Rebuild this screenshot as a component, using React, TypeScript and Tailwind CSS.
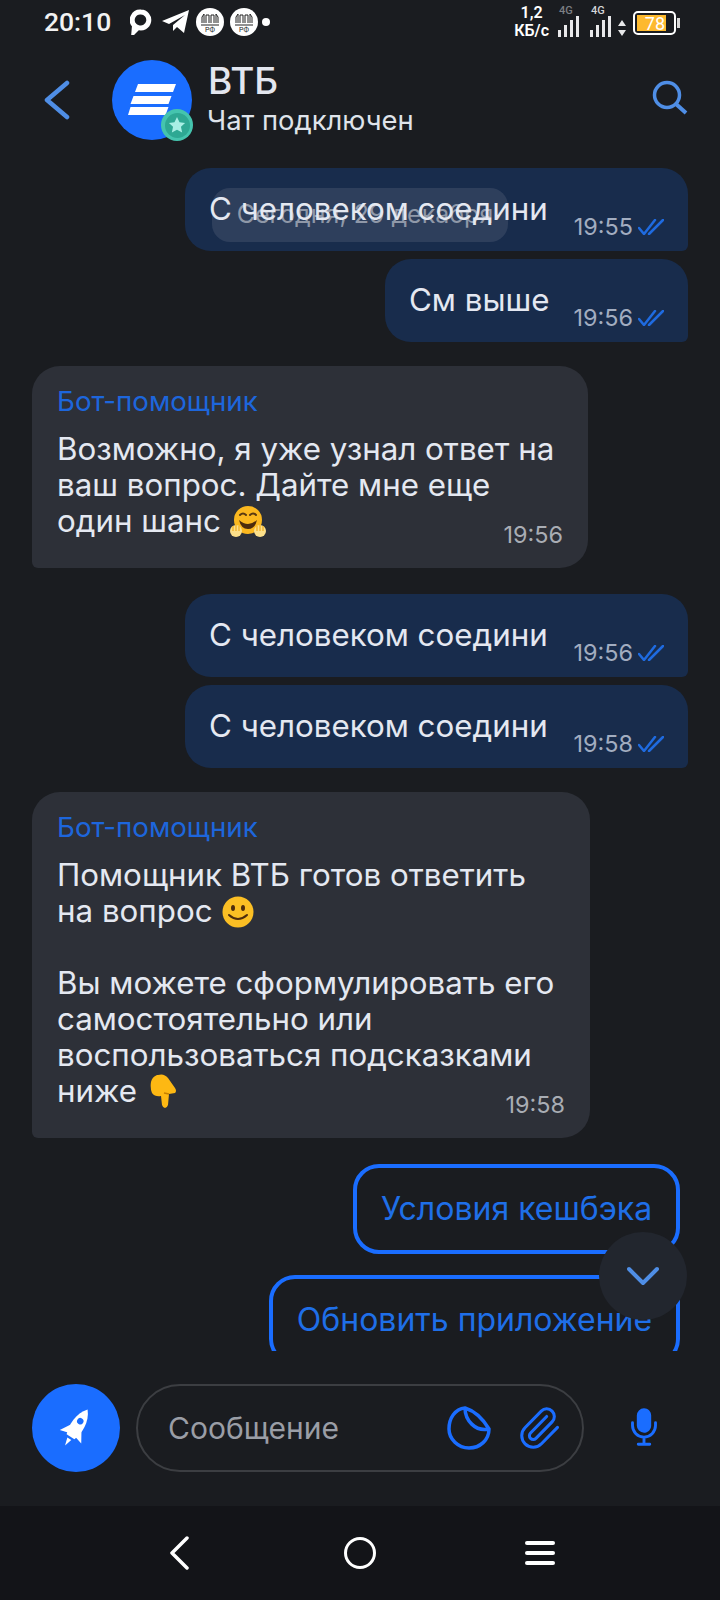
import React from "react";
import { IoMic } from "react-icons/io5";
import { Paperclip } from "lucide-react";

const DoubleCheck = () => (
  <svg width="26" height="16" viewBox="0 0 26 16" fill="none" stroke="#1f6be0" strokeWidth="2.500" strokeLinecap="round">
    <path d="M1 9l5 6L17 1" />
    <path d="M11 15L25 1" />
  </svg>
);

const HugEmoji = () => (
  <svg width="36" height="32" viewBox="0 0 36 32" className="inline-block align-[2px] -my-2">
    <circle cx="18" cy="14" r="14" fill="#fbb81f" />
    <path d="M10 9q3-3 6 0M20 9q3-3 6 0" fill="none" stroke="#5a3a12" strokeWidth="2" strokeLinecap="round" />
    <path d="M9 14q9 8 18 0q-2 9-9 9t-9-9z" fill="#4d2c0d" />
    <ellipse cx="6" cy="25" rx="6" ry="6" fill="#fde08a" />
    <ellipse cx="30" cy="25" rx="6" ry="6" fill="#fde08a" />
    <path d="M3 20v5M6 19v6M9 20v5M27 20v5M30 19v6M33 20v5" stroke="#f2b530" strokeWidth="1.5" />
  </svg>
);

const SmileEmoji = () => (
  <svg width="36" height="32" viewBox="0 0 36 32" className="inline-block align-[2px] -my-2">
    <circle cx="17" cy="16" r="15.500" fill="#fbbf24" />
    <ellipse cx="12" cy="12" rx="2" ry="3" fill="#4d2c0d" />
    <ellipse cx="22" cy="12" rx="2" ry="3" fill="#4d2c0d" />
    <path d="M8 19q9 8 18 0" fill="none" stroke="#4d2c0d" strokeWidth="2" strokeLinecap="round" />
  </svg>
);

const PointEmoji = () => (
  <svg width="28" height="34" viewBox="0 0 28 34" className="inline-block align-[6px] ml-[4px] -my-3">
    <path d="M8 1q6-2 10 3l7 10q2 3 0 5l-6 1-1 11q-1 3-3 3t-3-3l-1-9q-6 1-9-3Q0 14 1 8q1-5 6-7z" fill="#fdb813" />
    <path d="M19 20l-5-1" stroke="#c47f00" strokeWidth="1.500" />
  </svg>
);

const DomRf = () => (
  <svg width="28" height="28" viewBox="0 0 28 28">
    <circle cx="14" cy="14" r="14" fill="#fff" />
    <path d="M6 15V9l2-3v9M10 15V7h3v8M15 15V7h3v8M20 15V6l2 3v6" fill="none" stroke="#222" strokeWidth="1" />
    <path d="M5 17h18" stroke="#222" strokeWidth="1" />
    <text x="14" y="24" textAnchor="middle" fontSize="7" fill="#222" fontFamily="Roboto, sans-serif">РФ</text>
  </svg>
);

const Signal = ({ dim }: { dim?: boolean }) => (
  <div className="relative w-[21px] h-[30px]">
    <span className={`absolute -top-[2px] left-[1px] text-[11px] leading-[12px] font-medium ${dim ? "text-[#7d7f84]" : "text-[#d5d6d8]"}`}>4G</span>
    <svg className="absolute bottom-0 left-0" width="21" height="21" viewBox="0 0 21 21" fill="#e8e8ea">
      <rect x="0" y="14" width="3" height="7" />
      <rect x="6" y="9" width="3" height="12" />
      <rect x="12" y="4" width="3" height="17" />
      <rect x="18" y="0" width="3" height="21" />
    </svg>
  </div>
);

const OutBubble = ({ text, time, w }: { text: string; time: string; w: string }) => (
  <div className={`${w} h-[83px] shrink-0 self-end rounded-[26px] rounded-br-[6px] bg-[#182c4c] pl-6 pr-6 flex justify-between`}>
    <div className="relative z-10 pt-[21px] text-[31.3px] leading-[40px] text-[#e4e8f1]">{text}</div>
    <div className="pt-[44px] flex items-center gap-[5px] h-[74px]">
      <span className="text-[23.4px] leading-[30px] text-[#a2adc0]">{time}</span>
      <DoubleCheck />
    </div>
  </div>
);

const BotBubble = ({ w, time, children }: { w: string; time: string; children: React.ReactNode }) => (
  <div className={`${w} shrink-0 flex flex-col rounded-[28px] rounded-bl-[6px] bg-[#2d3038] pl-[25px] pr-[25px] pt-5 pb-[18px]`}>
    <div className="text-[27.7px] leading-[30px] text-[#1d66dc]">Бот-помощник</div>
    <div className="mt-[15px] text-[31.3px] leading-[36px] text-[#e4e8f1] whitespace-nowrap">{children}</div>
    <div className="self-end -mt-[19px] text-[23.4px] leading-[30px] text-[#a9adb4]">{time}</div>
  </div>
);

const ReplyButton = ({ text, w }: { text: string; w: string }) => (
  <div className={`${w} h-[90px] shrink-0 self-end mr-2 rounded-[26px] border-4 border-[#1a6dff] flex items-center justify-center text-[32px] text-[#1f6fe8] whitespace-nowrap`}>
    {text}
  </div>
);

export default function App() {
  return (
    <div className="w-[720px] h-[1600px] flex flex-col bg-[#1a1c20] overflow-hidden font-['Inter',sans-serif]">
      {/* Status bar */}
      <div className="h-12 shrink-0 flex items-center pl-[44px] pr-[40px] pb-1 font-['Roboto',sans-serif] text-white">
        <span className="text-[26.5px] leading-none font-medium text-[#f2f2f2]">20:10</span>
        <div className="ml-[19px] flex items-center">
          <svg width="22" height="26" viewBox="0 0 22 26" fill="none">
            <path d="M11 3a8 8 0 1 1-3 15.500l-4 4 .5-6a8 8 0 0 1 6.500-13.500z" stroke="#fff" strokeWidth="5" />
          </svg>
          <svg width="27" height="26" viewBox="0 0 27 26" className="ml-[10px]">
            <path d="M0 12L27 1l-5 23-7-6-4 4 0-6 12-10-16 9z" fill="#fff" />
          </svg>
          <span className="ml-[7px]"><DomRf /></span>
          <span className="ml-[6px]"><DomRf /></span>
          <span className="ml-1 w-2 h-2 rounded-full bg-white" />
        </div>
        <div className="ml-auto flex items-center">
          <div className="text-center text-[16px] leading-[18px] font-semibold">1,2<br />КБ/с</div>
          <span className="ml-[9px]"><Signal dim /></span>
          <span className="ml-[11px]"><Signal /></span>
          <svg width="8" height="16" viewBox="0 0 8 16" fill="#e8e8ea" className="ml-[7px] mt-3">
            <path d="M4 0l4 6H0zM4 16l4-6H0z" />
          </svg>
          <div className="ml-[7px] flex items-center mt-[1px]">
            <div className="w-[43px] h-[24px] rounded-[5px] border-2 border-white p-[2px] flex items-stretch">
              <div className="w-[29px] bg-[#fdb92e] text-[18px] leading-[17px] text-right text-white pr-[1px]">78</div>
            </div>
            <div className="ml-[1px] w-[3px] h-[10px] bg-[#d8d8d8]" />
          </div>
        </div>
      </div>

      {/* Header */}
      <div className="h-[104px] shrink-0 flex items-center pl-[44px] pr-8">
        <svg width="26" height="40" viewBox="0 0 26 40" fill="none" stroke="#4f8ee6" strokeWidth="4.500" strokeLinecap="round" strokeLinejoin="round">
          <path d="M23 3L3 20l20 17" />
        </svg>
        <div className="relative ml-[42px] w-20 h-20 rounded-full bg-[#1a6dff] shrink-0">
          <svg className="absolute left-4 top-6" width="48" height="31" viewBox="0 0 48 31" fill="#fff">
            <path d="M10 0h38l-3 8H7zM5.500 12h38l-3 8H2.500zM2.500 23h38l-3 8H0z" />
          </svg>
          <div className="absolute -right-[1px] -bottom-[1px] w-8 h-8 rounded-full bg-[#45c4ae] flex items-center justify-center">
            <div className="w-[25px] h-[25px] rounded-full bg-[#2ea893] flex items-center justify-center">
              <svg width="18" height="18" viewBox="0 0 20 20" fill="#a8efe4">
                <path d="M10 1l2.800 6 6.200.7-4.600 4.300 1.300 6.400L10 15.200l-5.700 3.200 1.300-6.400L1 7.700 7.200 7z" />
              </svg>
            </div>
          </div>
        </div>
        <div className="ml-[16px] flex flex-col">
          <div className="text-[37px] leading-[38px] font-medium text-[#e3e6ef] -mt-[2px]">ВТБ</div>
          <div className="text-[27.4px] leading-[34px] text-[#dfe3ea] mt-[3px] -ml-[1px]">Чат подключен</div>
        </div>
        <svg className="ml-auto -mt-1" width="36" height="36" viewBox="0 0 36 36" fill="none" stroke="#4f8ee6" strokeWidth="3.500">
          <circle cx="15" cy="15" r="12.500" />
          <path d="M24 24l10 9" strokeWidth="4" />
        </svg>
      </div>

      {/* Messages */}
      <div className="relative flex-1 min-h-0 overflow-hidden flex flex-col pl-8 pr-8 pt-4">
        <OutBubble text="С человеком соедини" time="19:55" w="w-[503px]" />
        <div className="h-2 shrink-0" />
        <OutBubble text="См выше" time="19:56" w="w-[303px]" />
        <div className="h-6 shrink-0" />
        <BotBubble w="w-[556px]" time="19:56">
          Возможно, я уже узнал ответ на
          <br />
          ваш вопрос. Дайте мне еще
          <br />
          один шанс <HugEmoji />
        </BotBubble>
        <div className="h-[26px] shrink-0" />
        <OutBubble text="С человеком соедини" time="19:56" w="w-[503px]" />
        <div className="h-2 shrink-0" />
        <OutBubble text="С человеком соедини" time="19:58" w="w-[503px]" />
        <div className="h-6 shrink-0" />
        <BotBubble w="w-[558px]" time="19:58">
          Помощник ВТБ готов ответить
          <br />
          на вопрос <SmileEmoji />
          <br />
          <br />
          Вы можете сформулировать его
          <br />
          самостоятельно или
          <br />
          воспользоваться подсказками
          <br />
          ниже <PointEmoji />
        </BotBubble>
        <div className="h-[26px] shrink-0" />
        <ReplyButton text="Условия кешбэка" w="w-[327px]" />
        <div className="h-[21px] shrink-0" />
        <ReplyButton text="Обновить приложение" w="w-[411px]" />

        {/* Floating date pill */}
        <div className="absolute left-[212px] top-9 w-[296px] h-[54px] pl-[10px] rounded-[18px] bg-[#3a4a66]/65 flex items-center justify-center text-[25px] text-[#8f98a8]">
          Сегодня, 29 декабря
        </div>
        {/* Scroll down button */}
        <div className="absolute right-[33px] bottom-[31px] w-[88px] h-[88px] rounded-full bg-[#22262e] flex items-center justify-center">
          <svg width="32" height="20" viewBox="0 0 32 20" fill="none" stroke="#4f8ee6" strokeWidth="4" strokeLinecap="round" strokeLinejoin="round">
            <path d="M2 3l14 14L30 3" />
          </svg>
        </div>
      </div>

      {/* Input bar */}
      <div className="h-[155px] shrink-0 flex items-start pt-[33px] pl-8">
        <div className="w-[88px] h-[88px] rounded-full bg-[#1a6dff] flex items-center justify-center">
          <svg width="46" height="46" viewBox="-20 -20 40 40">
            <g transform="rotate(32)" fill="#fff">
              <path d="M0-19C7-11 7 1 4 9H-4C-7 1-7-11 0-19z" />
              <path d="M-5-1L-11 9-4 7zM5-1L11 9 4 7z" />
              <path d="M-2 11h4l-2 7z" />
              <circle cx="0" cy="-7" r="2.800" fill="#1a6dff" />
            </g>
          </svg>
        </div>
        <div className="ml-4 w-[448px] h-[88px] rounded-[44px] border-2 border-[#3c3e42] flex items-center pl-[30px] pr-5">
          <span className="text-[30px] text-[#9a9ea6]">Сообщение</span>
          <svg className="ml-auto" width="44" height="44" viewBox="0 0 44 44" fill="none" stroke="#1a6dff" strokeWidth="3.500" strokeLinejoin="round">
            <path d="M18 2C8 3 2 12 2 23c0 10 9 19 20 19 11 0 20-8 20-19C36 13 28 5 18 2z" />
            <path d="M18 2C18 14 28 26 42 23" />
          </svg>
          <Paperclip className="ml-[25px]" color="#1a6dff" size={46} strokeWidth={1.6} />
        </div>
        <IoMic className="ml-[37px] mt-[20px]" color="#1a6dff" size={46} />
      </div>

      {/* Navigation bar */}
      <div className="h-[94px] shrink-0 bg-[#131418] flex items-center justify-center pl-1">
        <svg width="20" height="34" viewBox="0 0 20 34" fill="none" stroke="#fff" strokeWidth="3.500" strokeLinecap="round" strokeLinejoin="round">
          <path d="M18 2L3 17l15 15" />
        </svg>
        <div className="ml-[155px] w-8 h-8 rounded-full border-[3.5px] border-white" />
        <div className="ml-[149px] w-[30px] flex flex-col gap-[6px]">
          <span className="h-1 bg-white rounded-full" />
          <span className="h-1 bg-white rounded-full" />
          <span className="h-1 bg-white rounded-full" />
        </div>
      </div>
    </div>
  );
}
